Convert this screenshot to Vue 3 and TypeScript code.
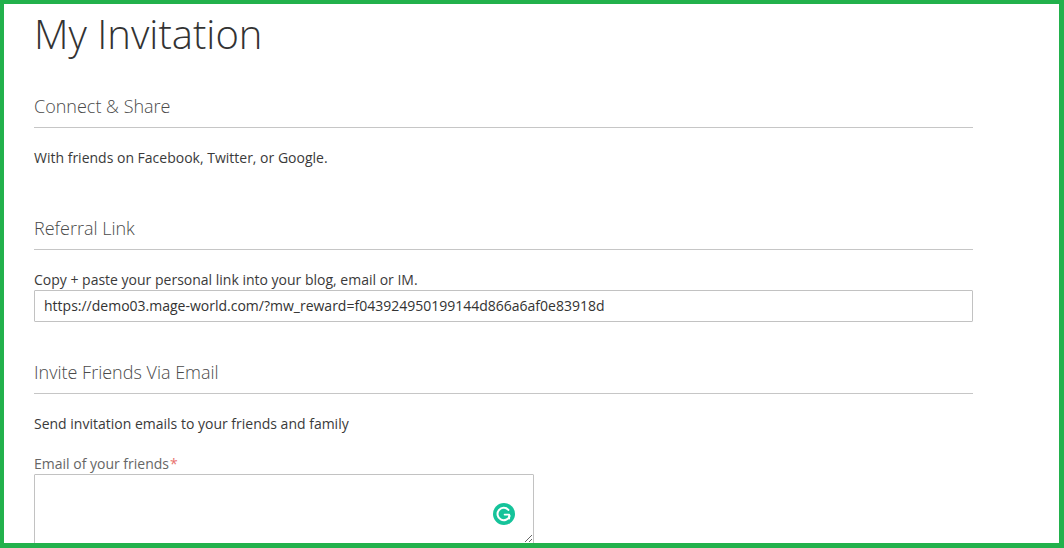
<script setup lang="ts">
const link = 'https://demo03.mage-world.com/?mw_reward=f043924950199144d866a6af0e83918d'
</script>

<template>
  <div class="frame">
    <main class="content">
      <h1 class="page-title">My Invitation</h1>

      <section class="block block-connect">
        <h2 class="block-title">Connect &amp; Share</h2>
        <p class="text">With friends on Facebook, Twitter, or Google.</p>
      </section>

      <section class="block block-link">
        <h2 class="block-title">Referral Link</h2>
        <p class="text">Copy + paste your personal link into your blog, email or IM.</p>
        <input class="link-input" type="text" :value="link" readonly />
      </section>

      <section class="block block-invite">
        <h2 class="block-title">Invite Friends Via Email</h2>
        <p class="text">Send invitation emails to your friends and family</p>
        <label class="label" for="emails">Email of your friends<span class="req">*</span></label>
        <div class="area-wrap">
          <textarea id="emails" class="area"></textarea>
          <span class="grammarly">
            <svg viewBox="0 0 22 22" width="22" height="22" aria-hidden="true">
              <circle cx="11" cy="11" r="11" fill="#15c39a" />
              <path d="M15.4 6.9A6.2 6.2 0 1 0 16.6 13" fill="none" stroke="#fff" stroke-width="2" stroke-linecap="round" />
              <path d="M11.6 11.6H16.2V15.6" fill="none" stroke="#fff" stroke-width="1.8" stroke-linecap="round" stroke-linejoin="round" />
            </svg>
          </span>
        </div>
      </section>
    </main>
  </div>
</template>

<style>
html, body { margin: 0; padding: 0; background: #fff; overflow: hidden; }
</style>

<style scoped>
.frame {
  box-sizing: border-box;
  width: 1064px;
  height: 548px;
  border-style: solid;
  border-color: #22b14c;
  border-width: 4px 5px 5px 4px;
  overflow: hidden;
  background: #fff;
  font-family: "Open Sans", "DejaVu Sans", sans-serif;
  color: #3a3a3a;
}
.content {
  width: 939px;
  margin-left: 30px;
}
.page-title {
  margin: 3px 0 0;
  font-size: 40px;
  font-weight: 300;
  line-height: 54px;
  height: 54px;
  color: #333;
}
.block-connect { margin-top: 33px; }
.block-link { margin-top: 48px; }
.block-invite { margin-top: 38px; }
.block-title {
  margin: 0;
  height: 33px;
  font-size: 18px;
  font-weight: 300;
  line-height: 24px;
  border-bottom: 1px solid #c6c6c6;
  color: #4a4a4a;
}
.text {
  margin: 20px 0 0;
  font-size: 14px;
  line-height: 20px;
}
.link-input {
  display: block;
  box-sizing: border-box;
  width: 939px;
  height: 32px;
  padding: 0 9px 2px;
  border: 1px solid #c2c2c2;
  border-radius: 1px;
  outline: none;
  font-family: inherit;
  font-size: 14px;
  color: #333;
  background: #fff;
}
.label {
  display: block;
  margin-top: 20px;
  font-size: 14px;
  line-height: 20px;
  color: #666;
}
.req {
  color: #e8716e;
  font-size: 14px;
  margin-left: 1px;
}
.area-wrap {
  position: relative;
  width: 500px;
  height: 70px;
}
.area {
  display: block;
  box-sizing: border-box;
  width: 500px;
  height: 70px;
  border: 1px solid #c2c2c2;
  border-radius: 1px;
  outline: none;
  padding: 10px;
  font-family: inherit;
  background: #fff;
}
.grammarly {
  position: absolute;
  left: 459px;
  top: 29px;
  width: 22px;
  height: 22px;
  line-height: 0;
}
</style>
